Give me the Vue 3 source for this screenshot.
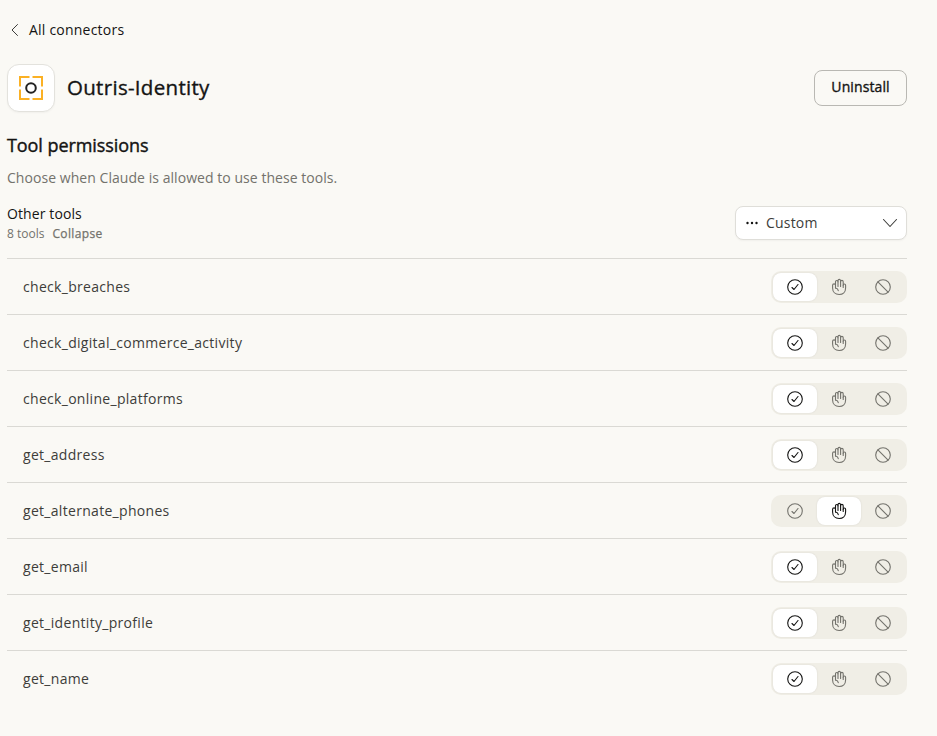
<template>
  <div class="page">
    <a class="back">
      <svg width="16" height="16" viewBox="0 0 16 16" fill="none" stroke="currentColor">
        <path d="M10.500 2.500 5 8l5.500 5.500" stroke-linecap="round" stroke-linejoin="round" />
      </svg>
      <span>All connectors</span>
    </a>

    <header class="header">
      <div class="logo">
        <svg width="26" height="26" viewBox="0 0 26 26" fill="none">
          <path d="M11.500 2H2v9.500M14.500 2H24v9.500M2 14.500V24h9.500M24 14.500V24h-9.500" stroke="#fbb124" stroke-width="2" />
          <circle cx="13" cy="13" r="4.800" stroke="#222" stroke-width="2" />
        </svg>
      </div>
      <h1 class="title">Outris-Identity</h1>
      <button class="uninstall">Uninstall</button>
    </header>

    <h2 class="subtitle">Tool permissions</h2>
    <p class="description">Choose when Claude is allowed to use these tools.</p>

    <div class="group">
      <div class="group-info">
        <div class="group-name">Other tools</div>
        <div class="group-meta">
          <span>{{ tools.length }} tools</span>
          <span class="collapse">Collapse</span>
        </div>
      </div>
      <button class="select">
        <svg width="14" height="14" viewBox="0 0 14 14" fill="currentColor">
          <circle cx="2.500" cy="7" r="1.200" />
          <circle cx="7" cy="7" r="1.200" />
          <circle cx="11.500" cy="7" r="1.200" />
        </svg>
        <span class="select-text">Custom</span>
        <svg class="chevron" width="16" height="16" viewBox="0 0 16 16" fill="none" stroke="currentColor">
          <path d="m1.500 4.500 6.500 7 6.500-7" stroke-width="1.100" stroke-linecap="round" stroke-linejoin="round" />
        </svg>
      </button>
    </div>

    <ul class="tools">
      <li v-for="tool in tools" :key="tool.name" class="tool">
        <span class="tool-name">{{ tool.name }}</span>
        <div class="switch">
          <button
            v-for="mode in modes"
            :key="mode"
            class="option"
            :class="{ active: tool.mode === mode }"
            @click="tool.mode = mode"
          >
            <svg width="20" height="20" viewBox="0 0 20 20" fill="none" stroke="currentColor" stroke-width="1.100" stroke-linecap="round" stroke-linejoin="round">
              <template v-if="mode === 'allow'">
                <circle cx="10" cy="10" r="7.300" />
                <path d="m7 10.500 2 2 4-5" />
              </template>
              <template v-else-if="mode === 'ask'">
                <path d="M6.500 11V4.700a1.250 1.250 0 0 1 2.500 0V3.700a1.300 1.300 0 0 1 2.600 0v1a1.250 1.250 0 0 1 2.600 0v3.500a1.200 1.200 0 0 1 2.400 0V11c0 4-2.700 6.500-6.400 6.500-4 0-6.600-2.700-6.600-6.500V8.300a1.400 1.400 0 0 1 2.900 0" />
                <path d="M9 4.700V9.500M11.600 4.700V9.500M14.200 8.200v2.300M6.500 11c1.700.2 2.600 1.100 2.800 2.600" />
              </template>
              <template v-else>
                <circle cx="10" cy="10" r="7.300" />
                <path d="m4.900 4.900 10.200 10.200" />
              </template>
            </svg>
          </button>
        </div>
      </li>
    </ul>
  </div>
</template>

<script setup>
import { ref } from 'vue'

const modes = ['allow', 'ask', 'block']

const tools = ref([
  { name: 'check_breaches', mode: 'allow' },
  { name: 'check_digital_commerce_activity', mode: 'allow' },
  { name: 'check_online_platforms', mode: 'allow' },
  { name: 'get_address', mode: 'allow' },
  { name: 'get_alternate_phones', mode: 'ask' },
  { name: 'get_email', mode: 'allow' },
  { name: 'get_identity_profile', mode: 'allow' },
  { name: 'get_name', mode: 'allow' }
])
</script>

<style>
body {
  background: #faf9f5;
}
</style>

<style scoped>
.page {
  box-sizing: border-box;
  min-height: 736px;
  padding: 20px 30px 0 7px;
  font-family: "Open Sans", "Noto Sans", sans-serif;
  font-size: 14px;
  line-height: 20px;
  color: #141413;
}

button {
  padding: 0;
  border: 0;
  background: none;
  font: inherit;
  color: inherit;
}

.back {
  display: flex;
  align-items: center;
  gap: 6px;
  letter-spacing: 0.22px;
}

.back svg {
  color: #3d3d3a;
}

.header {
  display: flex;
  align-items: center;
  height: 48px;
  margin-top: 24px;
}

.logo {
  display: flex;
  align-items: center;
  justify-content: center;
  box-sizing: border-box;
  width: 48px;
  height: 48px;
  border: 1px solid #e3e2dd;
  border-radius: 12px;
  background: #fff;
  box-shadow: 0 1px 2px rgba(0, 0, 0, 0.04);
}

.title {
  flex: 1;
  margin: 0 0 0 12px;
  padding-bottom: 2px;
  font-size: 20.500px;
  font-weight: 400;
  line-height: 28px;
  letter-spacing: 0.3px;
  -webkit-text-stroke: 0.35px currentColor;
}

.uninstall {
  box-sizing: border-box;
  width: 93px;
  height: 36px;
  padding-bottom: 2px;
  border: 1px solid #b9b8b3;
  border-radius: 8px;
  letter-spacing: 0.1px;
  -webkit-text-stroke: 0.35px currentColor;
}

.subtitle {
  margin: 21px 0 0;
  font-size: 18px;
  font-weight: 400;
  line-height: 24px;
  letter-spacing: -0.07px;
  -webkit-text-stroke: 0.4px currentColor;
}

.description {
  margin: 11px 0 0;
  color: #73726c;
  letter-spacing: 0.05px;
}

.group {
  display: flex;
  align-items: center;
  justify-content: space-between;
  height: 40px;
  margin-top: 15px;
}

.group-info {
  padding-top: 2px;
}

.group-name {
  letter-spacing: 0.1px;
}

.group-meta {
  display: flex;
  gap: 8px;
  font-size: 12px;
  color: #73726c;
}

.collapse {
  letter-spacing: 0.35px;
  -webkit-text-stroke: 0.25px currentColor;
}

.select {
  display: flex;
  align-items: center;
  box-sizing: border-box;
  width: 172px;
  height: 34px;
  padding: 0 8px 0 9px;
  border: 1px solid #dfded9;
  border-radius: 8px;
  background: #fff;
  box-shadow: 0 1px 2px rgba(0, 0, 0, 0.04);
}

.select-text {
  flex: 1;
  margin-left: 7px;
  text-align: left;
  letter-spacing: 0.2px;
  color: #3d3d3a;
}

.chevron {
  color: #3d3d3a;
}

.tools {
  margin: 15px 0 0;
  padding: 0;
  list-style: none;
}

.tool {
  display: flex;
  align-items: center;
  justify-content: space-between;
  box-sizing: border-box;
  height: 56px;
  padding-left: 16px;
  border-top: 1px solid #dad9d4;
}

.tool-name {
  color: #3d3d3a;
  letter-spacing: 0.3px;
}

.switch {
  display: flex;
  box-sizing: border-box;
  width: 136px;
  height: 32px;
  padding: 2px;
  border-radius: 10px;
  background: #f0eee6;
}

.option {
  display: flex;
  flex: 1;
  align-items: center;
  justify-content: center;
  border-radius: 8px;
  color: #73726c;
}

.option.active {
  background: #fff;
  color: #141413;
  box-shadow: 0 0 2px rgba(0, 0, 0, 0.1);
}
</style>
